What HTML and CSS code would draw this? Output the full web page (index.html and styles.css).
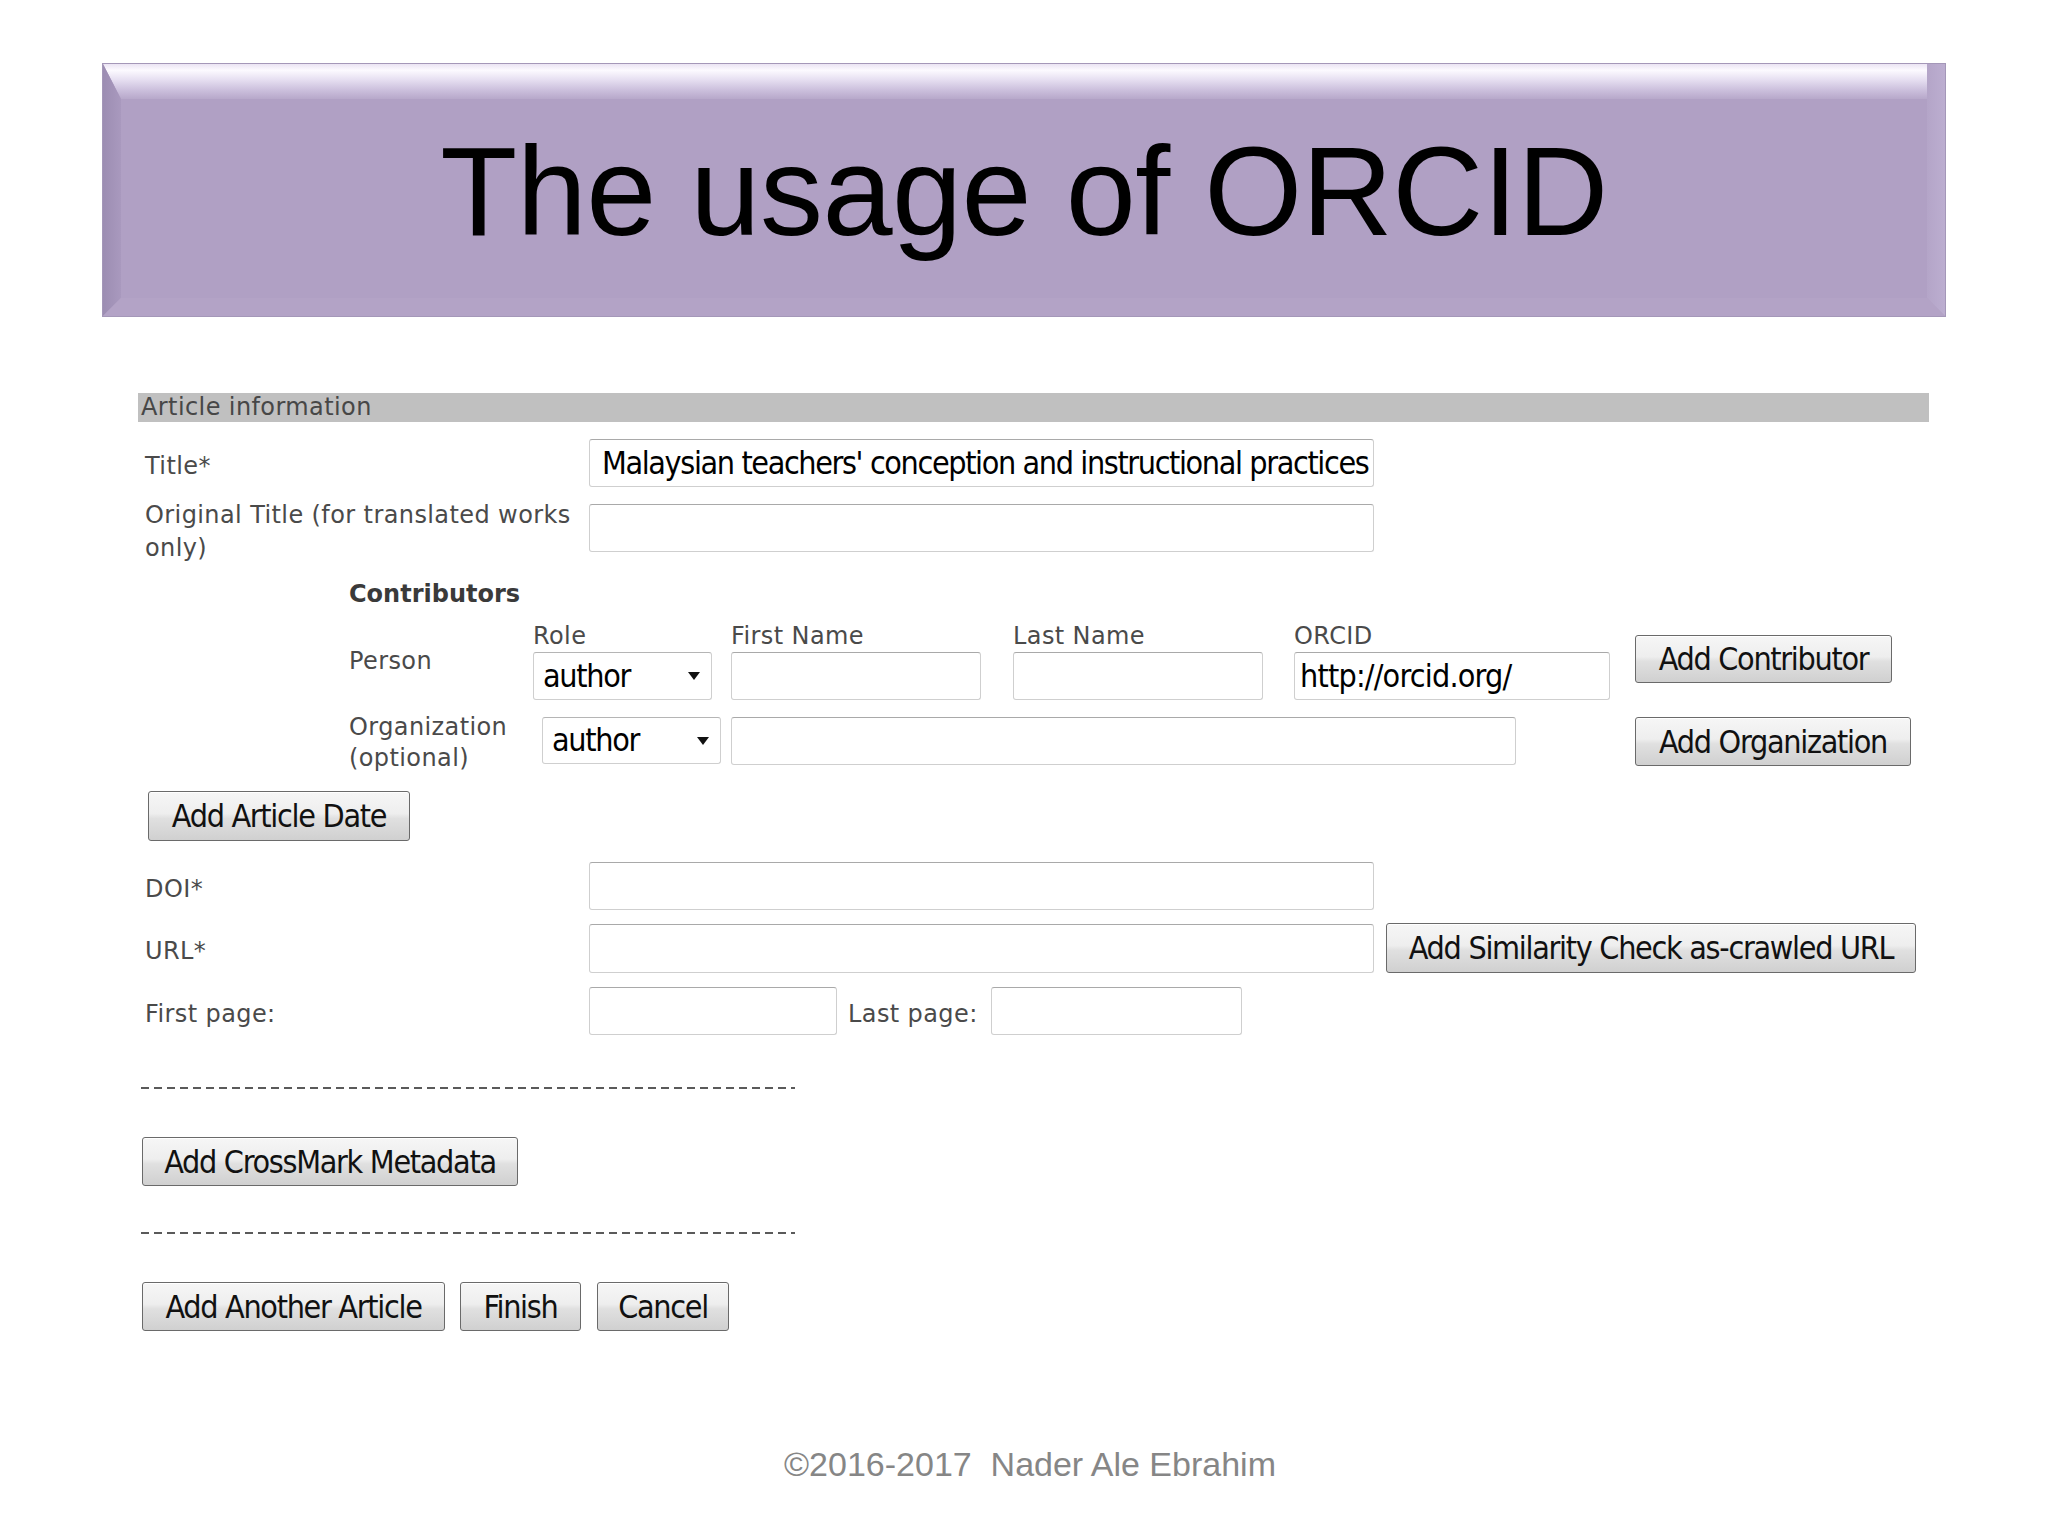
FILE: index.html
```html
<!DOCTYPE html>
<html lang="en">
<head>
<meta charset="utf-8">
<title>The usage of ORCID</title>
<link rel="stylesheet" href="styles.css">
</head>
<body>
<div class="slide">
  <div class="banner">
    <span class="bevel-top"></span>
    <span class="bevel-left"></span>
    <span class="bevel-right"></span>
    <span class="bevel-bottom"></span>
    <h1 class="banner-title">The usage of ORCID</h1>
  </div>

  <section class="form">
    <div class="bar">Article information</div>

    <div class="row row-title">
      <label class="lbl">Title*</label>
      <input class="inp inp-wide inp-title" type="text" value="Malaysian teachers' conception and instructional practices">
    </div>

    <div class="row row-orig">
      <label class="lbl lbl-two">Original Title (for translated works only)</label>
      <input class="inp inp-wide inp-orig" type="text">
    </div>

    <div class="contrib">
      <div class="contrib-title">Contributors</div>

      <div class="crow crow-person">
        <div class="clbl clbl-person">Person</div>
        <div class="field field-role">
          <div class="fh">Role</div>
          <div class="sel">author</div>
        </div>
        <div class="field field-first">
          <div class="fh">First Name</div>
          <input class="inp inp-name" type="text">
        </div>
        <div class="field field-last">
          <div class="fh">Last Name</div>
          <input class="inp inp-name" type="text">
        </div>
        <div class="field field-orcid">
          <div class="fh">ORCID</div>
          <input class="inp inp-orcid" type="text" value="http://orcid.org/">
        </div>
        <button class="btn btn-contrib" type="button">Add Contributor</button>
      </div>

      <div class="crow crow-org">
        <div class="clbl clbl-org">Organization (optional)</div>
        <div class="sel sel-org">author</div>
        <input class="inp inp-org" type="text">
        <button class="btn btn-org" type="button">Add Organization</button>
      </div>
    </div>

    <button class="btn btn-date" type="button">Add Article Date</button>

    <div class="row row-doi">
      <label class="lbl">DOI*</label>
      <input class="inp inp-wide" type="text">
    </div>

    <div class="row row-url">
      <label class="lbl">URL*</label>
      <input class="inp inp-wide inp-url" type="text">
      <button class="btn btn-sim" type="button">Add Similarity Check as-crawled URL</button>
    </div>

    <div class="row row-pages">
      <label class="lbl">First page:</label>
      <input class="inp inp-page" type="text">
      <label class="lbl-last">Last page:</label>
      <input class="inp inp-page inp-lastpage" type="text">
    </div>

    <div class="dash dash-1"></div>

    <button class="btn btn-crossmark" type="button">Add CrossMark Metadata</button>

    <div class="dash dash-2"></div>

    <div class="actions">
      <button class="btn btn-another" type="button">Add Another Article</button>
      <button class="btn btn-finish" type="button">Finish</button>
      <button class="btn btn-cancel" type="button">Cancel</button>
    </div>
  </section>

  <footer class="footer">©2016-2017&nbsp; Nader Ale Ebrahim</footer>
</div>
</body>
</html>
```

FILE: styles.css
```css
* { box-sizing: border-box; }

html, body {
  margin: 0;
  padding: 0;
  background: #ffffff;
}

.slide {
  width: 2048px;
  height: 1536px;
  padding-top: 63px;
  overflow: hidden;
  background: #ffffff;
}

/* ---------- Banner ---------- */
.banner {
  position: relative;
  margin-left: 102px;
  width: 1844px;
  height: 254px;
  background: #b0a0c4;
  border: 1px solid #a497b8;
  display: flex;
  align-items: center;
  justify-content: center;
}

.bevel-top,
.bevel-left,
.bevel-right,
.bevel-bottom {
  position: absolute;
  display: block;
}

.bevel-top {
  top: 0;
  left: 0;
  right: 0;
  height: 35px;
  background: linear-gradient(#ebe4f3 0%, #fcfaff 18%, #e6dff1 45%, #cbbfdc 75%, #b7a8ca 100%);
  clip-path: polygon(0 0, 100% 0, calc(100% - 18px) 100%, 18px 100%);
}

.bevel-left {
  top: 0;
  bottom: 0;
  left: 0;
  width: 18px;
  background: linear-gradient(to right, #9c8db2, #a999be);
  clip-path: polygon(0 0, 100% 35px, 100% calc(100% - 18px), 0 100%);
}

.bevel-right {
  top: 0;
  bottom: 0;
  right: 0;
  width: 18px;
  background: linear-gradient(to right, #b4a5c8, #bcaed0);
  clip-path: polygon(0 0, 100% 0, 100% 100%, 0 calc(100% - 18px), 0 35px);
}

.bevel-bottom {
  left: 0;
  right: 0;
  bottom: 0;
  height: 18px;
  background: #b3a3c6;
  clip-path: polygon(18px 0, calc(100% - 18px) 0, 100% 100%, 0 100%);
}

.banner-title {
  position: relative;
  margin: 0;
  font-family: "Liberation Sans", Arial, sans-serif;
  font-weight: normal;
  font-size: 126px;
  line-height: 1;
  color: #000000;
  letter-spacing: -0.5px;
  padding-top: 4px;
}

/* ---------- Form ---------- */
.form {
  margin-top: 76px;
  margin-left: 138px;
  width: 1791px;
  font-family: "DejaVu Sans", Verdana, sans-serif;
  font-size: 24px;
  letter-spacing: 0.4px;
  color: #4a4a4a;
}

.bar {
  height: 29px;
  line-height: 29px;
  background: #c0c0c0;
  color: #474747;
  padding-left: 3px;
  font-size: 24px;
}

.row {
  display: flex;
  align-items: center;
}

.lbl {
  width: 451px;
  padding-left: 7px;
  padding-top: 6px;
  flex: none;
  line-height: 33px;
}

.row-title { margin-top: 17px; }

.row-orig {
  margin-top: 9px;
  align-items: flex-start;
}
.row-orig .inp { margin-top: 8px; }
.row-orig .lbl { padding-top: 3px; margin-bottom: -3px; }
.lbl-two { padding-right: 8px; }

/* inputs */
.inp {
  display: block;
  flex: none;
  height: 48px;
  border: 1px solid #cfcfcf;
  border-top-color: #a9a9a9;
  border-radius: 3px;
  background: #ffffff;
  font-family: "DejaVu Sans Condensed", "DejaVu Sans", Tahoma, sans-serif;
  font-stretch: condensed;
  font-size: 32px;
  letter-spacing: -1.3px;
  color: #000000;
  padding: 0 5px;
  outline: none;
}

.inp-wide { width: 785px; }
.inp-title { padding-left: 12px; padding-right: 2px; letter-spacing: -1.38px; }
.inp-orcid { letter-spacing: -0.8px; }

/* contributors */
.contrib {
  margin-left: 211px;
  margin-top: 18px;
}

.contrib-title {
  font-weight: bold;
  color: #3a3a3a;
  line-height: 28px;
  letter-spacing: 0;
}

.crow {
  display: flex;
  align-items: flex-start;
}

.crow-person { margin-top: 14px; }

.clbl {
  flex: none;
  width: 184px;
}

.clbl-person {
  padding-top: 25px;
  line-height: 28px;
}

.field { flex: none; }
.fh {
  line-height: 28px;
  margin-bottom: 2px;
  height: 28px;
}

.field-role { width: 179px; }
.field-first { margin-left: 19px; }
.field-last { margin-left: 32px; }
.field-orcid { margin-left: 31px; }

.sel {
  position: relative;
  height: 48px;
  width: 179px;
  border: 1px solid #cfcfcf;
  border-top-color: #b5b5b5;
  border-radius: 3px;
  background: #ffffff;
  font-family: "DejaVu Sans Condensed", "DejaVu Sans", Tahoma, sans-serif;
  font-stretch: condensed;
  font-size: 32px;
  letter-spacing: -1.3px;
  line-height: 46px;
  color: #000000;
  padding-left: 9px;
}

.sel::after {
  content: "";
  position: absolute;
  right: 11px;
  top: 19px;
  border-left: 6px solid transparent;
  border-right: 6px solid transparent;
  border-top: 8px solid #111111;
}

.inp-name { width: 250px; }
.inp-orcid { width: 316px; }

.crow-org { margin-top: 11px; }

.clbl-org {
  width: 193px;
  line-height: 31px;
  padding-top: 1px;
  margin-bottom: -1px;
}

.sel-org {
  flex: none;
  margin-top: 6px;
  height: 47px;
  line-height: 45px;
}

.inp-org {
  margin-top: 6px;
  margin-left: 10px;
  width: 785px;
}

/* buttons */
.btn {
  display: block;
  flex: none;
  height: 49px;
  padding: 0;
  border: 1px solid #6a6a6a;
  border-radius: 3px;
  background: linear-gradient(#f6f6f6 0%, #eeeeee 45%, #e0e0e0 55%, #d0d0d0 100%);
  box-shadow: inset 0 1px 0 #ffffff;
  font-family: "DejaVu Sans Condensed", "DejaVu Sans", Tahoma, sans-serif;
  font-stretch: condensed;
  font-size: 32px;
  letter-spacing: -1.3px;
  color: #111111;
  text-align: center;
}

.btn-contrib {
  width: 257px;
  margin-left: 25px;
  margin-top: 13px;
  height: 48px;
}

.btn-org {
  width: 276px;
  margin-left: 119px;
  margin-top: 6px;
}

.btn-date {
  margin-left: 10px;
  margin-top: 18px;
  width: 262px;
  height: 50px;
}

.row-doi { margin-top: 21px; }
.row-url { margin-top: 13px; }
.inp-url { height: 49px; }

.btn-sim {
  margin-left: 12px;
  width: 530px;
  height: 50px;
}

.row-pages { margin-top: 14px; }
.inp-page { width: 248px; }

.lbl-last {
  flex: none;
  margin-left: 11px;
  width: 143px;
  line-height: 33px;
  padding-top: 6px;
}

.inp-lastpage { width: 251px; }

.dash {
  width: 654px;
  height: 2px;
  margin-left: 3px;
  background: repeating-linear-gradient(to right, #5a5a5a 0, #5a5a5a 8px, transparent 8px, transparent 13px);
}

.dash-1 { margin-top: 52px; }

.btn-crossmark {
  margin-left: 4px;
  margin-top: 48px;
  width: 376px;
}

.dash-2 { margin-top: 46px; }

.actions {
  display: flex;
  margin-left: 4px;
  margin-top: 48px;
}

.btn-another { width: 303px; }
.btn-finish { width: 121px; margin-left: 15px; }
.btn-cancel { width: 132px; margin-left: 16px; }

/* footer */
.footer {
  margin-top: 114px;
  text-align: center;
  font-family: "Liberation Sans", Arial, sans-serif;
  font-size: 34px;
  line-height: 39px;
  color: #868686;
  padding-left: 12px;
}
```
